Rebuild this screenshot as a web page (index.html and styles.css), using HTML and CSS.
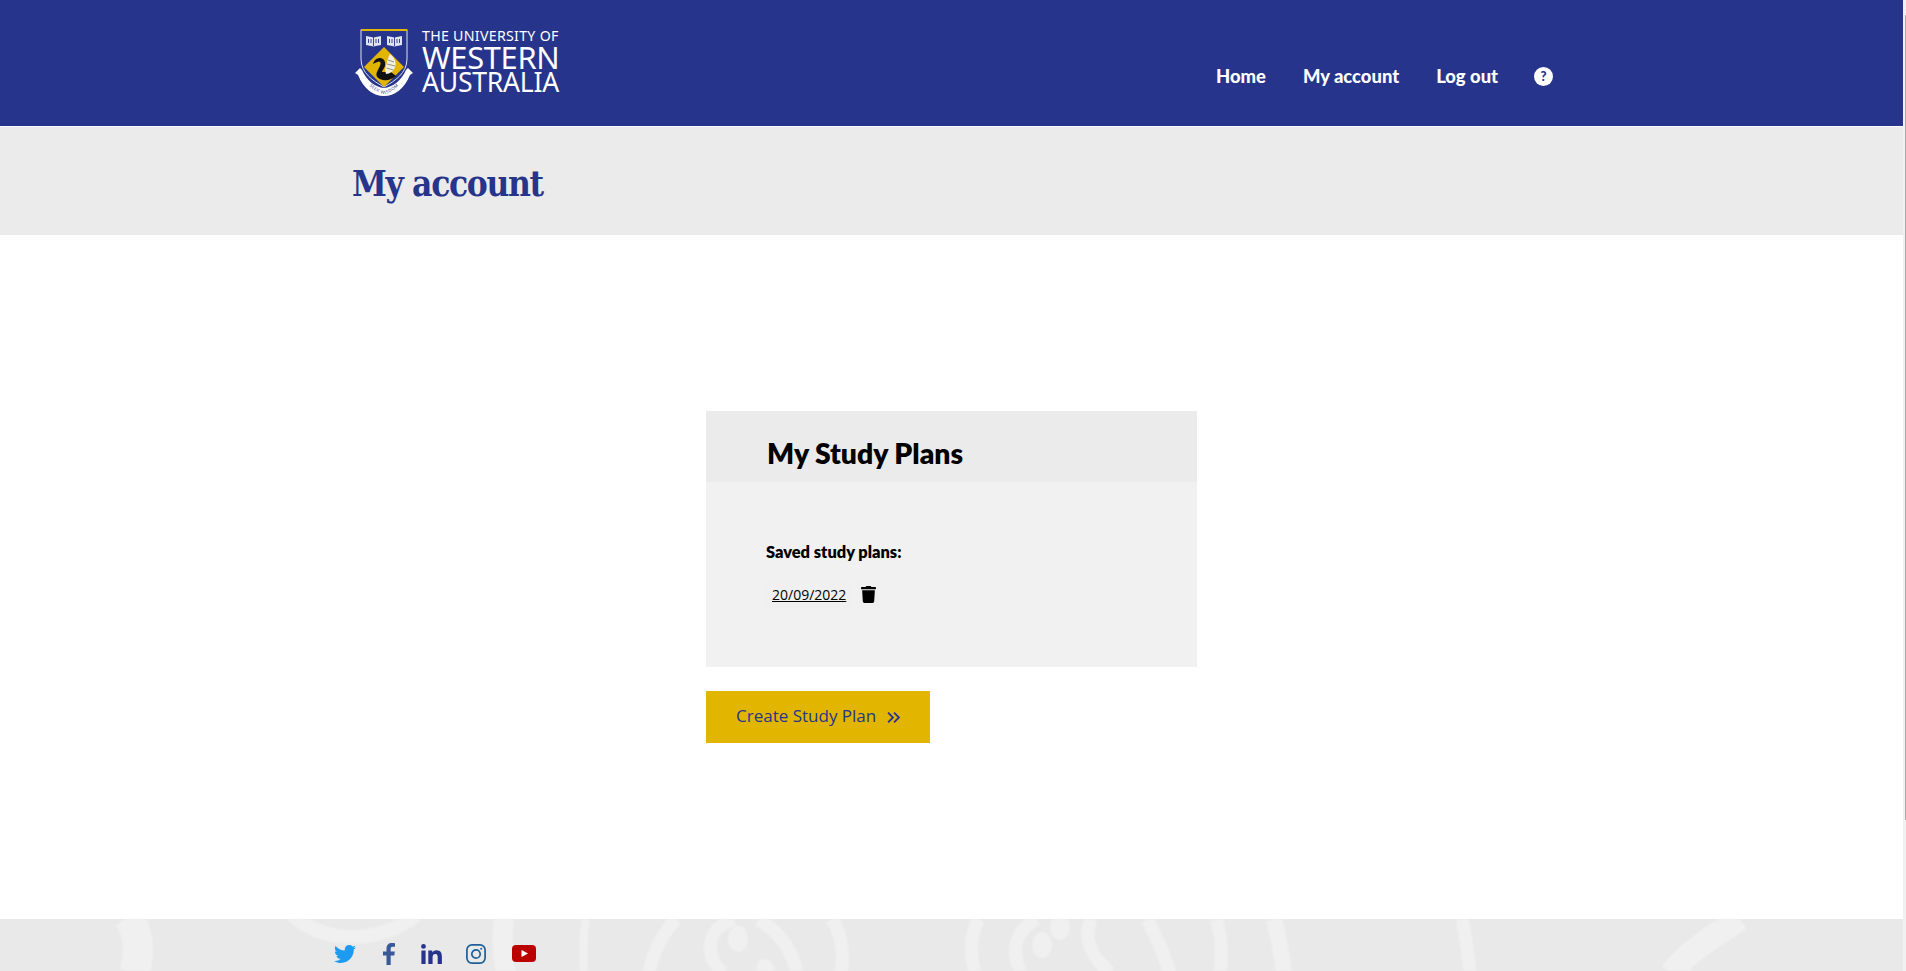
FILE: index.html
```html
<!DOCTYPE html>
<html lang="en">
<head>
<meta charset="utf-8">
<title>My account</title>
<link rel="stylesheet" href="styles.css">
</head>
<body>
<div class="scrollbar"><div class="thumb"></div></div>
<div class="page">
  <header class="site-header">
    <div class="header-inner">
      <a class="logo" href="#">
        <svg class="crest" viewBox="0 0 58 68" width="58" height="68" aria-hidden="true">
          <path d="M6 .5H52V30C52 44 40 52 29 58 18 52 6 44 6 30Z" fill="#27348b" stroke="#dfe3f2" stroke-width="1"/>
          <rect x="6" y="0" width="46" height="2" fill="#e2b600"/>
          <g fill="#dfe3f2">
            <path d="M11 7 18.5 8.5 26 7V16L18.5 17.5 11 16Z"/>
            <path d="M32 7 39.5 8.5 47 7V16L39.5 17.5 32 16Z"/>
          </g>
          <g stroke="#27348b" stroke-width=".9" fill="none">
            <path d="M18.5 8V17M13.5 10V14M16 10V14M21 10V14M23.5 10V14M39.5 8V17M34.5 10V14M37 10V14M42 10V14M44.5 10V14"/>
          </g>
          <path d="M29 18 49 38 29 58 9 38Z" fill="#e2b600"/>
          <path d="M18 35C19 31 22 29 25 29 29 29 31 33 30 37 29 40 27 41 27 43 30 43 33 43 36 43L41 47C37 50 33 52 28 51 23 50 20 47 22 43 23 40 25 38 25.5 35 26 33 24 32 23 33 21 33 20 34 18 35Z" fill="#111"/>
          <path d="M30 41C32 33 33 28 35 25 39 28 42 33 40 38 39 42 35 45 31 45Z" fill="#f3f1e6"/>
          <path d="M33 31 39 33M32 35 40 37M31.5 39 38.5 41" stroke="#6d6a55" stroke-width=".7" fill="none"/>
          <path d="M0 44 5 39 7 41C12 52 20 58 29 59 38 58 46 52 51 41L53 39 58 44 55 46C49 60 40 67 29 67 18 67 9 60 3 46Z" fill="#fff"/>
          <path id="motto-line" d="M9 50C15 59 22 64 29 65 36 64 43 59 49 50" fill="none"/>
          <text class="motto"><textPath href="#motto-line" startOffset="50%" text-anchor="middle">SEEK WISDOM</textPath></text>
        </svg>
        <span class="wordmark">
          <span class="wm-small">THE UNIVERSITY OF</span>
          <span class="wm-large">WESTERN</span>
          <span class="wm-large wm-aus">AUSTRALIA</span>
        </span>
      </a>
      <nav class="main-nav">
        <a href="#">Home</a>
        <a href="#">My account</a>
        <a href="#">Log out</a>
        <a class="help" href="#" aria-label="Help">?</a>
      </nav>
    </div>
  </header>

  <section class="title-band">
    <h1>My account</h1>
  </section>

  <main class="content">
    <section class="card">
      <h2 class="card-head">My Study Plans</h2>
      <div class="card-body">
        <p class="saved">Saved study plans:</p>
        <div class="plan-row">
          <a class="plan-link" href="#">20/09/2022</a>
          <button class="trash" type="button" aria-label="Delete">
            <svg viewBox="0 0 448 512" width="15" height="17"><path fill="#000" d="M432 32H312l-9.4-18.7A24 24 0 0 0 281.1 0H166.8a23.72 23.72 0 0 0-21.4 13.3L136 32H16A16 16 0 0 0 0 48v32a16 16 0 0 0 16 16h416a16 16 0 0 0 16-16V48a16 16 0 0 0-16-16zM53.2 467a48 48 0 0 0 47.9 45h245.8a48 48 0 0 0 47.9-45L416 128H32z"/></svg>
          </button>
        </div>
      </div>
    </section>
    <a class="create" href="#">
      <span>Create Study Plan</span>
      <svg class="chev" viewBox="0 0 12 12" width="13" height="13" fill="none" stroke="#27348b" stroke-width="1.7"><path d="M1 1.5 5.5 6 1 10.5M6.5 1.5 11 6 6.5 10.5"/></svg>
    </a>
  </main>

  <footer class="site-footer">
    <svg class="swirls" viewBox="0 0 1903 52" preserveAspectRatio="none" aria-hidden="true">
      <g fill="none" stroke="#f0f0f0" stroke-width="13">
        <path stroke-width="30" d="M128 -2C140 16 140 36 134 54"/>
        <path stroke-width="14" d="M292 -4C315 16 340 18 352 18 375 18 400 10 416 -4"/>
        <path stroke-width="20" d="M504 -2C502 16 502 36 506 54"/>
        <path stroke-width="8" d="M586 -2C583 16 583 36 584 54"/>
        <path d="M676 0C660 18 652 36 649 54"/>
        <path d="M734 1C712 6 700 30 722 54M758 1C780 12 792 32 797 54"/>
        <path d="M832 0C842 16 844 36 841 54"/>
        <path d="M979 0C970 16 970 36 975 54"/>
        <path d="M1037 0C1014 12 1010 34 1022 54"/>
        <path d="M1091 0C1084 18 1088 34 1110 54"/>
        <path d="M1147 0C1156 16 1164 36 1170 54"/>
        <path d="M1216 0C1222 16 1222 36 1220 54"/>
        <path stroke-width="16" d="M1274 0C1278 16 1282 36 1284 54"/>
        <path d="M1462 0C1466 16 1468 36 1470 54"/>
        <path stroke-width="24" d="M1740 0C1712 18 1684 36 1672 54"/>
      </g>
      <g fill="#f0f0f0">
        <ellipse cx="738" cy="20" rx="10" ry="13"/>
        <ellipse cx="765" cy="51" rx="9" ry="11"/>
        <ellipse cx="1060" cy="8" rx="10" ry="13"/>
        <ellipse cx="1042" cy="26" rx="10" ry="13"/>
      </g>
    </svg>
    <div class="social">
      <a href="#" class="s-tw" aria-label="Twitter"><svg viewBox="0 0 512 512" width="22" height="22"><path fill="#1d9bf0" d="M459.37 151.716c.325 4.548.325 9.097.325 13.645 0 138.72-105.583 298.558-298.558 298.558-59.452 0-114.68-17.219-161.137-47.106 8.447.974 16.568 1.299 25.34 1.299 49.055 0 94.213-16.568 130.274-44.832-46.132-.975-84.792-31.188-98.112-72.772 6.498.974 12.995 1.624 19.818 1.624 9.421 0 18.843-1.3 27.614-3.573-48.081-9.747-84.143-51.98-84.143-102.985v-1.299c13.969 7.797 30.214 12.67 47.431 13.319-28.264-18.843-46.781-51.005-46.781-87.391 0-19.492 5.197-37.36 14.294-52.954 51.655 63.675 129.3 105.258 216.365 109.807-1.624-7.797-2.599-15.918-2.599-24.04 0-57.828 46.782-104.934 104.934-104.934 30.213 0 57.502 12.67 76.67 33.137 23.715-4.548 46.456-13.32 66.599-25.34-7.798 24.366-24.366 44.833-46.132 57.827 21.117-2.273 41.584-8.122 60.426-16.243-14.292 20.791-32.161 39.308-52.628 54.253z"/></svg></a>
      <a href="#" class="s-fb" aria-label="Facebook"><svg viewBox="0 0 12 22" width="12" height="22"><path fill="#3b5998" d="M3.5 22V12.5H0V8.5H3.5V5.6C3.5 2 5.6 0 8.8 0 10.3 0 11.6.1 12 .2V3.8H9.8C8 3.8 7.7 4.7 7.7 5.9V8.5H11.8L11.3 12.5H7.7V22Z"/></svg></a>
      <a href="#" class="s-in" aria-label="LinkedIn"><svg viewBox="0 0 21 20" width="21" height="20"><path fill="#27348b" d="M.4 6.6H4.6V20H.4ZM2.5 0A2.4 2.4 0 1 1 2.5 4.8 2.4 2.4 0 1 1 2.5 0ZM7.3 6.6H11.3V8.4C11.9 7.3 13.3 6.2 15.4 6.2 19.7 6.2 20.9 9 20.9 12.7V20H16.7V13.5C16.7 11.9 16.6 9.9 14.4 9.9 12.1 9.9 11.6 11.6 11.6 13.4V20H7.3Z"/></svg></a>
      <a href="#" class="s-ig" aria-label="Instagram"><svg viewBox="0 0 20 20" width="20" height="20" fill="none" stroke="#1f5f99" stroke-width="1.7"><rect x=".9" y=".9" width="18.2" height="18.2" rx="5"/><circle cx="10" cy="10" r="4.2"/><circle cx="15.2" cy="4.8" r="1" fill="#1f5f99" stroke="none"/></svg></a>
      <a href="#" class="s-yt" aria-label="YouTube"><svg viewBox="0 0 24 17" width="24" height="17"><rect width="24" height="17" rx="4" fill="#bb0000"/><path d="M9.5 5 16 8.5 9.5 12Z" fill="#fff"/></svg></a>
    </div>
  </footer>
</div>
</body>
</html>
```

FILE: styles.css
```css
* { box-sizing: border-box; }
html, body { margin: 0; height: 971px; overflow: hidden; background: #fff; }
body { font-family: "Open Sans", "Liberation Sans", sans-serif; color: #000; display: flex; flex-direction: row-reverse; }
a { text-decoration: none; color: inherit; }

.page { flex: 1; min-width: 0; height: 971px; overflow: hidden; display: flex; flex-direction: column; }

.scrollbar { width: 3px; height: 971px; background: #f1f1f1; padding: 15px 0 0 2px; }
.thumb { width: 1px; height: 805px; background: #a8a8a8; }

.site-header { height: 127px; background: #27348b; border-bottom: 1px solid #fff; flex: none; }
.header-inner { height: 126px; padding: 29px 350px 0 355px; display: flex; justify-content: space-between; align-items: flex-start; }

.logo { display: flex; gap: 9px; color: #fff; }
.crest { display: block; }
.motto { font-family: "Open Sans", sans-serif; font-size: 4.4px; fill: #27348b; letter-spacing: .5px; }
.wordmark { display: flex; flex-direction: column; width: 140px; white-space: nowrap; font-family: "Noto Sans", sans-serif; }
.wm-small { font-size: 14.2px; line-height: 14px; letter-spacing: .02em; }
.wm-large { font-size: 30.8px; line-height: 25px; margin-top: 2px; letter-spacing: -.01em; }
.wm-aus { font-size: 26.6px; line-height: 24px; margin-top: 0; letter-spacing: -.01em; }

.main-nav { display: flex; align-items: center; gap: 37px; margin-top: 36px; font-family: Lato, sans-serif; font-weight: 900; font-size: 18.4px; line-height: 22px; color: #fff; }
.help { width: 19px; height: 19px; margin-left: -1px; border-radius: 50%; background: #fff; color: #27348b; font-size: 13px; line-height: 19px; text-align: center; }

.title-band { height: 108px; background: #ebebeb; padding: 5px 0 0 352px; display: flex; align-items: center; flex: none; }
h1 { margin: 0; font-family: "DejaVu Serif Condensed", "DejaVu Serif", serif; font-stretch: condensed; font-weight: 700; font-size: 35px; letter-spacing: -1.35px; line-height: 46px; color: #27348b; }

.content { flex: 1; padding: 176px 0 0 706px; }
.card { width: 491px; height: 256px; background: #f1f1f1; }
.card-head { margin: 0; height: 71px; padding: 0 0 0 61px; background: #ebebeb; font-family: Lato, sans-serif; font-weight: 800; font-size: 28.3px; line-height: 84px; overflow: hidden; }
.card-body { padding: 60px 0 0 60px; }
.saved { margin: 0; font-family: Lato, sans-serif; font-weight: 800; font-size: 16.4px; line-height: 20px; }
.plan-row { display: flex; gap: 3px; margin-top: 20px; }
.plan-link { padding: 0 6px; height: 26px; line-height: 26px; font-size: 14px; color: #000; text-decoration: underline; background: #f0f0f0; }
.trash { width: 26px; height: 26px; border: 0; padding: 0 0 2px; background: #f0f0f0; display: flex; align-items: center; justify-content: center; }

.create { margin-top: 24px; width: 224px; height: 52px; background: #e2b600; color: #27348b; display: flex; align-items: center; gap: 11px; padding: 0 0 4px 30px; font-size: 17px; }
.chev { margin-top: 4px; }

.site-footer { position: relative; flex: none; height: 52px; background: #e9e9e9; overflow: hidden; }
.swirls { position: absolute; inset: 0; width: 100%; height: 100%; filter: blur(1px); }
.social { position: relative; display: flex; align-items: center; padding: 17px 0 0 334px; height: 52px; }
.social a { display: block; line-height: 0; }
.s-fb { margin-left: 27px; }
.s-in { margin-left: 26px; }
.s-ig { margin-left: 24px; }
.s-yt { margin-left: 26px; }
```
